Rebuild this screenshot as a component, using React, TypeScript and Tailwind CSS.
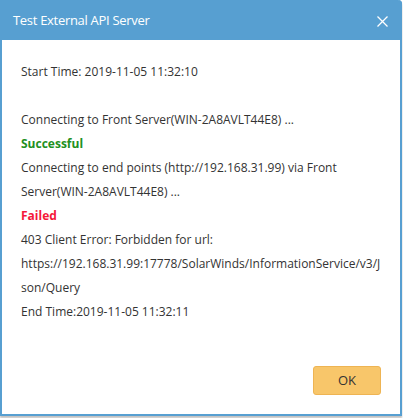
import React from "react";

// lines are laid out as the dialog wraps them
const lines: { text: string; tone?: "ok" | "fail" }[] = [
  { text: "Connecting to Front Server(WIN-2A8AVLT44E8) ..." },
  { text: "Successful", tone: "ok" },
  { text: "Connecting to end points (http://192.168.31.99) via Front" },
  { text: "Server(WIN-2A8AVLT44E8) ..." },
  { text: "Failed", tone: "fail" },
  { text: "403 Client Error: Forbidden for url:" },
  { text: "https://192.168.31.99:17778/SolarWinds/InformationService/v3/J" },
  { text: "son/Query" },
  { text: "End Time:2019-11-05 11:32:11" },
];

const App: React.FC = () => {
  return (
    <div className="w-[403px] h-[418px] bg-white font-['Open_Sans',sans-serif]">
      {/* dialog */}
      <div className="w-[402px] h-[416px] flex flex-col border-2 border-t-0 border-[#579fd1] rounded-tr-[4px] bg-white shadow-[0_2px_2px_rgba(0,0,0,0.25)]">
        {/* header */}
        <div className="h-[40px] -mx-[2px] flex items-center justify-between bg-[#579fd1] rounded-tr-[4px] pl-[13px] pr-[14px]">
          <span className="text-white text-[13px] font-normal tracking-[-0.3px] mt-[2px]">Test External API Server</span>
          <svg width="11" height="11" viewBox="0 0 11 11" className="mt-[2px]">
            <path d="M0.5 0.5L10.5 10.5M10.5 0.5L0.5 10.5" stroke="white" strokeWidth="1.3" />
          </svg>
        </div>

        {/* message body */}
        <div className="flex-1 pt-[20px] pl-[19px] pr-[10px] text-[12px] leading-[24px] text-[#333333] whitespace-nowrap">
          <p>Start Time: 2019-11-05 11:32:10</p>
          <p>&nbsp;</p>
          {lines.map((line, i) => (
            <p
              key={i}
              className={
                line.tone === "ok"
                  ? "font-bold text-[#229022]"
                  : line.tone === "fail"
                  ? "font-bold text-[#f5173a]"
                  : ""
              }
            >
              {line.text}
            </p>
          ))}
        </div>

        {/* footer */}
        <div className="flex justify-end pr-[19px] pb-[19px]">
          <button className="w-[68px] h-[29px] bg-[#f8c66a] border border-[#eeb453] rounded-[3px] text-[13px] text-[#333333]">
            OK
          </button>
        </div>
      </div>
    </div>
  );
};

export default App;
